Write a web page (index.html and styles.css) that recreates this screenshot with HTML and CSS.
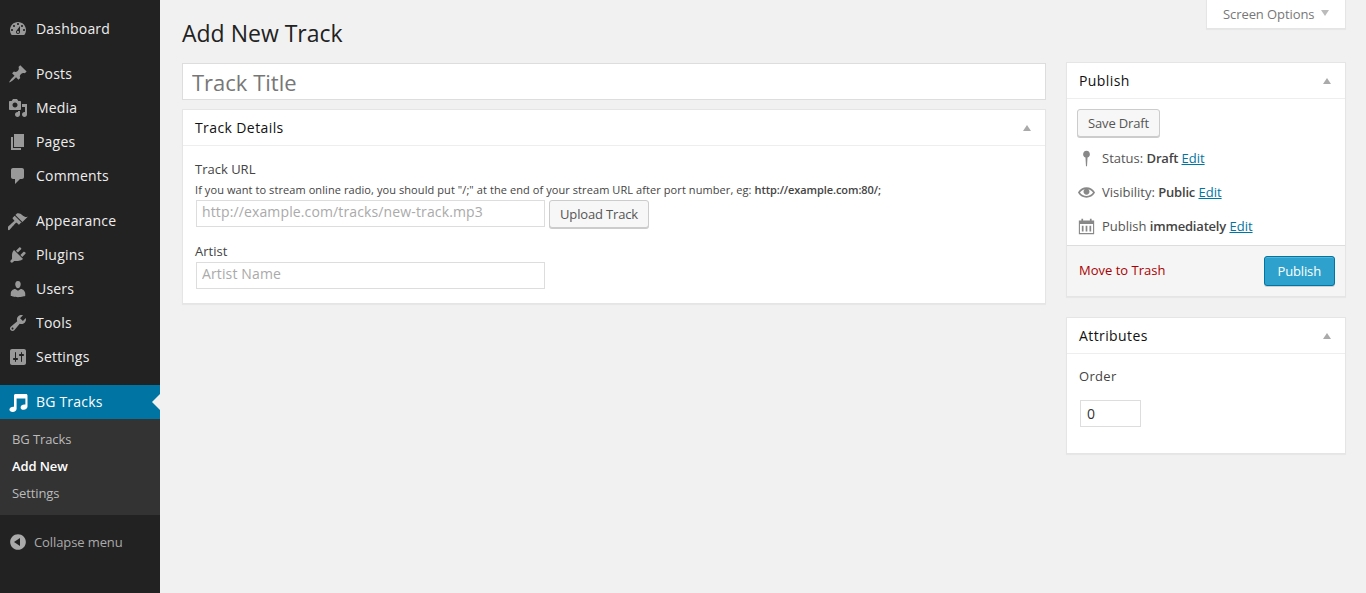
FILE: index.html
```html
<!DOCTYPE html>
<html lang="en">
<head>
<meta charset="utf-8">
<title>Add New Track</title>
<link rel="stylesheet" href="styles.css">
</head>
<body>
<div class="layout">
  <nav class="sidebar">
    <ul class="menu group-first">
      <li class="item"><svg class="ico" viewBox="0 0 20 20"><path d="M3.76 16h12.48c1.1-1.37 1.76-3.11 1.76-5 0-4.42-3.58-8-8-8s-8 3.58-8 8c0 1.89.66 3.63 1.76 5zM10 4c.55 0 1 .45 1 1s-.45 1-1 1-1-.45-1-1 .45-1 1-1zM6 6c.55 0 1 .45 1 1s-.45 1-1 1-1-.45-1-1 .45-1 1-1zm8 0c.55 0 1 .45 1 1s-.45 1-1 1-1-.45-1-1 .45-1 1-1zm-5.37 5.55L12 7v6c0 1.1-.9 2-2 2s-2-.9-2-2c0-.57.24-1.08.63-1.45zM4 10c.55 0 1 .45 1 1s-.45 1-1 1-1-.45-1-1 .45-1 1-1zm12 0c.55 0 1 .45 1 1s-.45 1-1 1-1-.45-1-1 .45-1 1-1zm-5 3c0-.55-.45-1-1-1s-1 .45-1 1 .45 1 1 1 1-.45 1-1z" fill-rule="evenodd"/></svg>Dashboard</li>
    </ul>
    <ul class="menu group">
      <li class="item"><svg class="ico" viewBox="0 0 20 20"><path d="M10.44 3.02l1.82-1.82 6.36 6.35-1.83 1.82c-1.05-.68-2.48-.57-3.41.36l-.75.75c-.92.93-1.04 2.35-.35 3.41l-1.83 1.82-2.41-2.41-2.8 2.79c-.42.42-3.38 2.71-3.8 2.29s1.86-3.39 2.28-3.81l2.79-2.79L4.1 9.36l1.83-1.82c1.05.69 2.48.57 3.4-.36l.75-.75c.93-.92 1.05-2.35.36-3.41z"/></svg>Posts</li>
      <li class="item"><svg class="ico" viewBox="0 0 20 20"><path fill-rule="evenodd" d="M13 11V4c0-.55-.45-1-1-1h-1.67L9 1H5L3.67 3H2c-.55 0-1 .45-1 1v7c0 .55.45 1 1 1h10c.55 0 1-.45 1-1zM7 4.5c1.38 0 2.5 1.12 2.5 2.5S8.38 9.5 7 9.5 4.5 8.38 4.5 7 5.62 4.5 7 4.5zM14 6h5v10.5c0 1.38-1.12 2.5-2.5 2.5S14 17.88 14 16.5s1.12-2.5 2.5-2.5c.17 0 .34.02.5.05V9h-3V6zm-4 8.05V13h2v3.5c0 1.38-1.12 2.5-2.5 2.5S7 17.88 7 16.5 8.12 14 9.5 14c.17 0 .34.02.5.05z"/></svg>Media</li>
      <li class="item"><svg class="ico" viewBox="0 0 20 20"><path d="M6 15V2h10v13H6zm-1 1h8v2H3V5h2v11z"/></svg>Pages</li>
      <li class="item"><svg class="ico" viewBox="0 0 20 20"><path d="M5 2h9c1.1 0 2 .9 2 2v7c0 1.1-.9 2-2 2h-2l-5 5v-5H5c-1.1 0-2-.9-2-2V4c0-1.1.9-2 2-2z"/></svg>Comments</li>
    </ul>
    <ul class="menu group">
      <li class="item"><svg class="ico" viewBox="0 0 20 20"><path d="M14.48 11.06L7.41 3.99l1.5-1.5c.5-.56 2.3-.47 3.51.32 1.21.8 1.43 1.28 2.91 2.1 1.18.64 2.45 1.26 4.45.85zm-.71.71L6.7 4.7 4.93 6.47c-.39.39-.39 1.02 0 1.41l1.06 1.06c.39.39.39 1.03 0 1.42-.6.6-6.76 6.04-6.76 6.04-.51.51-.51 1.26.33 2.1.84.84 1.59.84 2.1.33 0 0 5.44-6.16 6.04-6.76.39-.39 1.03-.39 1.42 0l1.06 1.06c.39.39 1.02.39 1.41 0l1.18-1.36z"/></svg>Appearance</li>
      <li class="item"><svg class="ico" viewBox="0 0 20 20"><path d="M13.11 4.36L9.87 7.6 8 5.73l3.24-3.24c.35-.34 1.05-.2 1.56.32.52.51.66 1.21.31 1.55zm-8 1.77l.91-1.12 9.01 9.01-1.19.84c-.71.71-2.63 1.16-3.82 1.16H6.14L4.9 17.26c-.59.59-1.54.59-2.12 0-.59-.58-.59-1.53 0-2.12l1.24-1.24v-3.88c0-1.13.4-3.19 1.09-3.89zm7.26 3.97l3.24-3.24c.34-.35 1.04-.21 1.55.31.52.51.66 1.21.31 1.55l-3.24 3.25z"/></svg>Plugins</li>
      <li class="item"><svg class="ico" viewBox="0 0 20 20"><path d="M10 9.25c-2.27 0-2.73-3.44-2.73-3.44C7 4.02 7.82 2 9.97 2c2.16 0 2.98 2.02 2.71 3.81 0 0-.41 3.44-2.68 3.44zm0 2.57L12.72 10c2.39 0 4.52 2.33 4.52 4.53v2.49s-3.65 1.13-7.24 1.13c-3.65 0-7.24-1.13-7.24-1.13v-2.49c0-2.25 1.94-4.48 4.47-4.48z"/></svg>Users</li>
      <li class="item"><svg class="ico" viewBox="0 0 20 20"><path fill-rule="evenodd" d="M16.68 9.77c-1.34 1.34-3.3 1.67-4.95.99l-5.41 6.52c-.99.99-2.59.99-3.58 0s-.99-2.59 0-3.57l6.52-5.42c-.68-1.65-.35-3.61.99-4.95 1.28-1.28 3.12-1.62 4.72-1.06l-2.89 2.89 2.82 2.82 2.86-2.87c.53 1.58.18 3.39-1.08 4.65zM3.81 16.21c.4.39 1.04.39 1.43 0 .4-.4.4-1.04 0-1.43-.39-.4-1.03-.4-1.43 0-.39.39-.39 1.03 0 1.43z"/></svg>Tools</li>
      <li class="item"><svg class="ico" viewBox="0 0 20 20"><path fill-rule="evenodd" d="M18 16V4c0-1.1-.9-2-2-2H4c-1.1 0-2 .9-2 2v12c0 1.1.9 2 2 2h12c1.1 0 2-.9 2-2zM8 11h1c.55 0 1 .45 1 1s-.45 1-1 1H8v1.5c0 .28-.22.5-.5.5s-.5-.22-.5-.5V13H6c-.55 0-1-.45-1-1s.45-1 1-1h1V5.5c0-.28.22-.5.5-.5s.5.22.5.5V11zm5-2h-1c-.55 0-1-.45-1-1s.45-1 1-1h1V5.5c0-.28.22-.5.5-.5s.5.22.5.5V7h1c.55 0 1 .45 1 1s-.45 1-1 1h-1v5.5c0 .28-.22.5-.5.5s-.5-.22-.5-.5V9z"/></svg>Settings</li>
    </ul>
    <ul class="menu group-current">
      <li class="item current"><svg class="ico" viewBox="0 0 20 20"><path d="M6 3.500C6 2.500 6.800 2 7.500 2H18c.9 0 1.500.6 1.500 1.500V14.500c0 1.900-1.700 3.200-3.900 3.200-1.800 0-3-.9-3-2.300 0-1.700 1.700-3 3.800-3 .4 0 .7 0 1 .1V6.500H8.600V16.800c0 1.900-1.700 3.200-3.900 3.200-2 0-3.300-1-3.300-2.400 0-1.700 1.900-2.900 3.900-2.900.1 0 .2 0 .7.1z"/></svg>BG Tracks</li>
    </ul>
    <ul class="submenu">
      <li class="subitem">BG Tracks</li>
      <li class="subitem active">Add New</li>
      <li class="subitem">Settings</li>
    </ul>
    <div class="collapse"><svg class="ico-collapse" viewBox="0 0 20 20"><path d="M10 2.16c4.33 0 7.84 3.51 7.84 7.84s-3.51 7.84-7.84 7.84S2.16 14.33 2.16 10 5.71 2.16 10 2.16zm2 11.84V6l-6 4z" fill-rule="evenodd"/></svg>Collapse menu</div>
  </nav>

  <main class="content">
    <header class="top">
      <h1 class="title">Add New Track</h1>
      <div class="screen-options">Screen Options<span class="arrow-down"></span></div>
    </header>
    <div class="columns">
      <div class="col-main">
        <input class="title-input" type="text" placeholder="Track Title">
        <section class="box">
          <div class="box-head"><h2 class="box-title">Track Details</h2><span class="arrow-up"></span></div>
          <div class="details">
            <label class="field-label">Track URL</label>
            <p class="hint">If you want to stream online radio, you should put "/;" at the end of your stream URL after port number, eg: <strong>http://example.com:80/;</strong></p>
            <div class="url-row">
              <input class="text-input" type="text" placeholder="http://example.com/tracks/new-track.mp3">
              <button class="btn upload" type="button">Upload Track</button>
            </div>
            <label class="field-label artist-label">Artist</label>
            <input class="text-input artist-input" type="text" placeholder="Artist Name">
          </div>
        </section>
      </div>
      <aside class="col-side">
        <section class="box publish-box">
          <div class="box-head side-head"><h2 class="box-title">Publish</h2><span class="arrow-up"></span></div>
          <div class="publish-body">
            <button class="btn save" type="button">Save Draft</button>
            <div class="meta">
              <svg class="meta-ico" viewBox="0 0 20 20"><path d="M10 1a4 4 0 0 1 1.2 7.8L10.6 19H9.4L8.800 8.800A4 4 0 0 1 10 1z"/></svg>
              <span>Status: <b>Draft</b> <a class="link" href="#">Edit</a></span>
            </div>
            <div class="meta">
              <svg class="meta-ico" viewBox="0 0 20 20"><path fill-rule="evenodd" d="M19.7 9.400C17.700 6 14 3.900 10 3.900S2.300 6 .3 9.400L0 10l.3.6c2 3.400 5.700 5.500 9.700 5.500s7.700-2.100 9.700-5.500l.3-.6-.3-.6zM10 14.100c-3.100 0-6-1.600-7.700-4.100C3.600 8 5.700 6.600 8 6.100c-.9.6-1.500 1.700-1.500 2.900 0 1.900 1.600 3.500 3.500 3.500s3.500-1.600 3.500-3.500c0-1.200-.6-2.300-1.500-2.900 2.300.5 4.400 1.900 5.700 3.900-1.700 2.500-4.600 4.100-7.700 4.100z"/></svg>
              <span>Visibility: <b>Public</b> <a class="link" href="#">Edit</a></span>
            </div>
            <div class="meta">
              <svg class="meta-ico" viewBox="0 0 20 20"><path fill-rule="evenodd" d="M4 1h2v2h8V1h2v2h3v16H1V3h3V1zM2.300 7v10.700h15.400V7H2.300zM4.500 9h2v7h-2V9zm4.500 0h2v7H9V9zm4.500 0h2v7h-2V9z"/></svg>
              <span>Publish <b>immediately</b> <a class="link" href="#">Edit</a></span>
            </div>
          </div>
          <div class="publish-foot">
            <a class="trash" href="#">Move to Trash</a>
            <button class="btn primary" type="button">Publish</button>
          </div>
        </section>
        <section class="box attr-box">
          <div class="box-head side-head"><h2 class="box-title">Attributes</h2><span class="arrow-up"></span></div>
          <div class="attr-body">
            <p class="order-label">Order</p>
            <input class="order-input" type="text" value="0">
          </div>
        </section>
      </aside>
    </div>
  </main>
</div>
</body>
</html>
```
FILE: styles.css
```css
* { box-sizing: border-box; }
html, body { margin: 0; padding: 0; height: 100%; overflow: hidden; }
body { background: #f1f1f1; color: #444; font: 13px/19px "Open Sans", "Liberation Sans", sans-serif; }
ul { list-style: none; margin: 0; padding: 0; }
.layout { display: flex; height: 100%; }

.sidebar { width: 160px; flex: none; background: #222; padding-top: 12px; color: #eee; }
.group { margin-top: 11px; }
.group-current { margin-top: 11px; }
.item { display: flex; align-items: center; height: 34px; padding-left: 8px; font-size: 14px; line-height: 18px; letter-spacing: .2px; color: #eee; position: relative; }
.ico { width: 20px; height: 20px; margin-right: 8px; fill: #999; flex: none; }
.current { background: #0074a2; color: #fff; }
.current .ico { fill: #fff; }
.current::after { content: ""; position: absolute; right: 0; top: 9px; border: 8px solid transparent; border-right-color: #f1f1f1; border-left-width: 0; }
.submenu { background: #333; padding: 7px 0 8px; }
.subitem { height: 27px; padding-left: 12px; font-size: 13px; line-height: 27px; letter-spacing: -.1px; color: #bbb; }
.active { color: #fff; font-weight: 600; }
.collapse { display: flex; align-items: center; margin-top: 17px; height: 20px; padding-left: 8px; color: #aaa; font-size: 13px; letter-spacing: -.1px; }
.ico-collapse { width: 20px; height: 20px; fill: #aaa; margin-right: 6px; }

.content { flex: 1; min-width: 0; padding: 0 20px 0 22px; }
.top { display: flex; justify-content: space-between; align-items: flex-start; height: 62px; }
.title { margin: 17px 0 0; font-size: 23px; line-height: 32px; font-weight: 400; color: #222; }
.screen-options { display: flex; align-items: center; justify-content: space-between; width: 140px; height: 29px; padding: 0 16px 0 16px; background: #fff; border: 1px solid #e5e5e5; border-top: 0; box-shadow: 0 1px 1px rgba(0,0,0,.04); color: #777; font-size: 13px; letter-spacing: -.08px; }
.arrow-down { border: 4.500px solid transparent; border-top: 6px solid #bbb; border-bottom: 0; margin-top: -2px; }
.arrow-up { border: 4.500px solid transparent; border-bottom: 6px solid #aaa; border-top: 0; }

.columns { display: flex; gap: 20px; align-items: flex-start; }
.col-main { flex: 1; min-width: 0; padding-top: 1px; }
.col-side { width: 280px; flex: none; }
.title-input { display: block; width: 100%; height: 37px; padding: 0 9px; border: 1px solid #ddd; background: #fff; font: 22px/35px "Open Sans", sans-serif; color: #555; outline: 0; border-radius: 0; margin-bottom: 9px; }
.title-input::placeholder { color: #777; opacity: 1; }
input::placeholder { font-family: "Open Sans", sans-serif; }

.box { background: #fff; border: 1px solid #e5e5e5; box-shadow: 0 1px 1px rgba(0,0,0,.04); }
.box-head { display: flex; align-items: center; justify-content: space-between; height: 36px; padding: 0 14px 0 12px; border-bottom: 1px solid #eee; }
.side-head { padding-right: 14px; }
.box-title { margin: 0; font-size: 14px; line-height: 19px; font-weight: 400; letter-spacing: .4px; color: #111; }

.details { padding: 14px 12px 14px; }
.field-label { display: block; font-size: 13px; line-height: 18px; color: #444; }
.hint { margin: 3px 0 0; font-size: 11px; line-height: 17px; letter-spacing: .08px; color: #444; }
.hint strong { font-weight: 600; letter-spacing: -.08px; }
.url-row { display: flex; gap: 4px; align-items: flex-start; padding-left: 1px; margin-top: 2px; }
.text-input { display: block; width: 349px; height: 27px; padding: 0 5px 4px; border: 1px solid #ddd; background: #fff; font: 14px/20px "Open Sans", sans-serif; letter-spacing: .13px; outline: 0; border-radius: 0; }
.text-input::placeholder { color: #aaa; opacity: 1; }
.artist-label { margin-top: 14px; }
.artist-input { margin-left: 1px; margin-top: 2px; }

.btn { height: 28px; padding: 0 10px; border: 1px solid #ccc; border-radius: 3px; background: #f7f7f7; box-shadow: 0 1px 0 #ccc; color: #555; font: 13px/26px "Open Sans", sans-serif; letter-spacing: -.15px; }
.publish-box { height: 235px; }
.publish-body { padding: 10px 10px 0; height: 146px; }
.save { display: block; }
.meta { display: flex; align-items: center; gap: 7px; height: 34px; font-size: 13px; color: #555; margin-left: 1px; }
.meta:first-of-type { margin-top: 4px; }
.meta-ico { width: 17px; height: 17px; fill: #888; flex: none; }
.meta b { font-weight: 600; letter-spacing: -.2px; color: #444; }
.link { color: #0074a2; text-decoration: underline; }
.publish-foot { display: flex; align-items: center; justify-content: space-between; height: 51px; padding: 0 10px 0 12px; background: #f5f5f5; border-top: 1px solid #ddd; }
.trash { margin-top: -2px; color: #a00; text-decoration: none; font-size: 13px; }
.primary { height: 30px; padding: 0 13px; background: #2ea2cc; border-color: #0074a2; box-shadow: inset 0 1px 0 rgba(120,200,230,.5), 0 1px 0 rgba(0,0,0,.15); color: #fff; }
.attr-box { margin-top: 20px; height: 137px; }
.attr-body { padding: 13px 12px 0 12px; }
.order-label { margin: 0; font-size: 13px; line-height: 19px; font-weight: 400; letter-spacing: .3px; color: #444; }
.order-input { display: block; width: 61px; height: 27px; margin-top: 14px; margin-left: 1px; padding: 0 6px; border: 1px solid #ddd; font: 14px/25px "Open Sans", sans-serif; color: #333; outline: 0; border-radius: 0; }
```
